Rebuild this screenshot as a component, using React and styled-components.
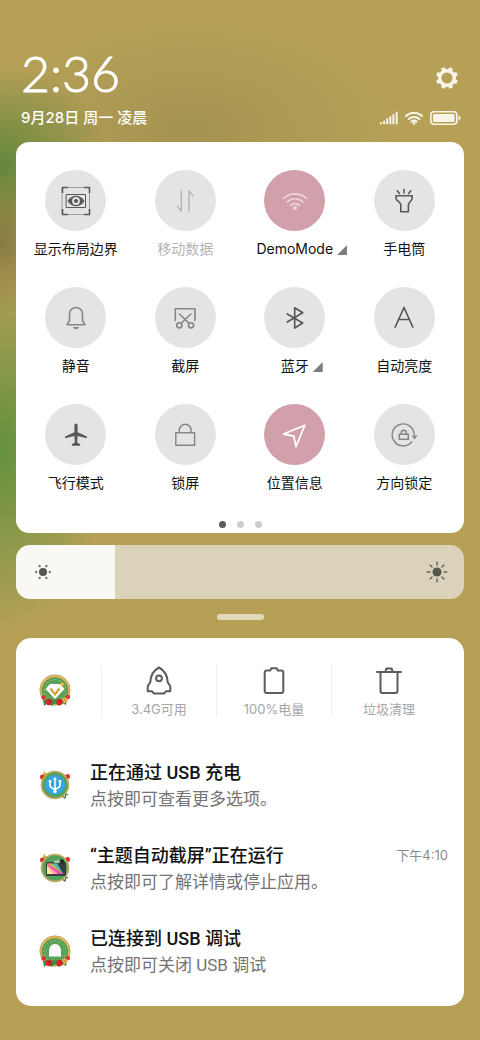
import React, { useState } from "react";
import styled, { createGlobalStyle } from "styled-components";

const tiles = [
  { name: "显示布局边界", icon: "layout" },
  { name: "移动数据", icon: "data", tone: "disabled" },
  { name: "DemoMode", icon: "wifi", tone: "dim", more: true },
  { name: "手电筒", icon: "torch" },
  { name: "静音", icon: "bell", tone: "soft" },
  { name: "截屏", icon: "scissors", tone: "soft" },
  { name: "蓝牙", icon: "bluetooth", more: true },
  { name: "自动亮度", icon: "auto" },
  { name: "飞行模式", icon: "plane" },
  { name: "锁屏", icon: "lock", tone: "soft" },
  { name: "位置信息", icon: "location", tone: "active" },
  { name: "方向锁定", icon: "rotation", tone: "soft" },
];

const stats = [
  { name: "3.4G可用", icon: "rocket" },
  { name: "100%电量", icon: "battery" },
  { name: "垃圾清理", icon: "trash" },
];

const notifications = [
  { title: "正在通过 USB 充电", text: "点按即可查看更多选项。", badge: "usb" },
  {
    title: "“主题自动截屏”正在运行",
    text: "点按即可了解详情或停止应用。",
    badge: "theme",
    time: "下午4:10",
  },
  { title: "已连接到 USB 调试", text: "点按即可关闭 USB 调试", badge: "debug" },
];

const icons = {
  layout: (
    <>
      <rect x="2.500" y="2.500" width="27" height="27" strokeWidth="1" opacity="0.5" />
      <path d="M2.500 8V2.500H8M24 2.500h5.500V8M29.500 24v5.500H24M8 29.500H2.500V24" strokeLinecap="butt" />
      <rect x="6.500" y="9.500" width="19" height="13" strokeWidth="1" />
      <path
        d="M7.500 16c2.500-3.800 5.500-5.200 8.500-5.200s6 1.400 8.500 5.200c-2.500 3.800-5.500 5.200-8.500 5.200S10 19.800 7.500 16z"
        fill="currentColor"
        stroke="none"
      />
      <circle cx="16" cy="16" r="3" stroke="#e4e4e4" strokeWidth="1.800" />
    </>
  ),
  data: <path d="M12.300 6v20l-4-5M20 26V6l4 5" strokeWidth="1.600" />,
  wifi: (
    <>
      <path d="M4.500 13.500a16.500 16.500 0 0 1 23 0M8 17a11.500 11.500 0 0 1 16 0M11.500 20.500a6.500 6.500 0 0 1 9 0" strokeWidth="1.700" />
      <circle cx="16" cy="23" r="2" fill="currentColor" stroke="none" />
    </>
  ),
  torch: (
    <path d="M8 10.800h16.200v2.400c0 3-3.800 3.600-3.800 6.800v6.800h-7.600V20c0-3.200-4.800-3.800-4.800-6.800zM16 4.500V8M9.300 5.800l2.200 2.700M22.800 5.800l-2.200 2.700" />
  ),
  bell: (
    <>
      <path d="M7 22.800l2.500-4.300V12a6.500 6.500 0 0 1 13 0v6.500l2.500 4.300z" />
      <path d="M13 25h6c-.6 1.400-1.600 2-3 2s-2.400-.6-3-2z" fill="currentColor" stroke="none" />
    </>
  ),
  scissors: (
    <>
      <path d="M6.300 18.500V6.800h19.700v11.700M12.300 21.300L21.800 12M20 21.300L10.500 12" />
      <circle cx="10.300" cy="23.300" r="2.600" />
      <circle cx="22" cy="23.300" r="2.600" />
    </>
  ),
  bluetooth: <path d="M8.300 12l15.400 9-8 5V5.800l8 5-15.400 9.200" strokeWidth="1.700" />,
  auto: <path d="M7.200 25L16 5.500 24.800 25M10.500 17.500h11" strokeWidth="1.700" />,
  plane: (
    <path
      d="M16 4.600c1 0 1.600.9 1.600 2.100v6.500l8.800 4.100c.5.300.6.800.6 1.900l-9.400-2.200-.4 6.500 3 1.800v1.500h-8.400v-1.500l3-1.800-.4-6.500L5 19.200c0-1.100.1-1.600.6-1.900l8.800-4.100V6.700c0-1.200.6-2.100 1.600-2.100z"
      fill="currentColor"
      stroke="none"
    />
  ),
  lock: <path d="M6.800 13.800h18.800v12.500H6.800zM10.300 13.500v-2.300a5.900 5.900 0 0 1 11.800 0v2.300" strokeWidth="1.400" />,
  location: <path d="M25.700 6.300L4.500 15l10.300 2.200L17 27.700z" strokeWidth="1.800" />,
  rotation: (
    <>
      <path d="M23.800 22.800A11 11 0 1 1 26.200 15.500" strokeWidth="1.400" />
      <path d="M23.500 16.500h6l-3 4z" fill="currentColor" stroke="none" />
      <path d="M11.300 15.300h9v5h-9zM13.300 15v-1.300a2.500 2.500 0 0 1 5 0V15" />
    </>
  ),
  rocket: (
    <>
      <path d="M16 2.500C11 5.200 7.500 10.500 7.300 17.300l-2.600 4v5H9l2 2.200h10l2-2.200h4.300v-5l-2.600-4C24.500 10.500 21 5.200 16 2.500z" strokeWidth="2" />
      <circle cx="16" cy="13.300" r="2.900" strokeWidth="2" />
    </>
  ),
  battery: (
    <path d="M8.700 5.500h3.500l1-2.200h5.600l1 2.200h3.500c1.300 0 2 .7 2 2V26c0 1.300-.7 2-2 2H8.700c-1.300 0-2-.7-2-2V7.500c0-1.300.7-2 2-2z" strokeWidth="2" />
  ),
  trash: (
    <path d="M4 7h24M12.300 7l1-3.500h5.400l1 3.500M7.500 7v19c0 1.300.7 2 2 2h13c1.300 0 2-.7 2-2V7" strokeWidth="2" />
  ),
};

const Icon = ({ name }) => (
  <svg
    width="32"
    height="32"
    viewBox="0 0 32 32"
    fill="none"
    stroke="currentColor"
    strokeWidth="1.600"
    strokeLinecap="round"
    strokeLinejoin="round"
    aria-hidden="true"
  >
    {icons[name]}
  </svg>
);

const Gear = () => (
  <svg width="24" height="24" viewBox="0 0 24 24" fill="none" aria-hidden="true">
    <circle cx="12" cy="12" r="7.300" stroke="currentColor" strokeWidth="3.400" />
    {[0, 1, 2, 3, 4, 5, 6, 7].map((n) => (
      <rect
        key={n}
        x="9.900"
        y="1"
        width="4.200"
        height="4.500"
        rx="1"
        fill="currentColor"
        transform={`rotate(${22.5 + n * 45} 12 12)`}
      />
    ))}
  </svg>
);

const Signal = () => (
  <svg width="18" height="14" viewBox="0 0 18 14" fill="none" stroke="currentColor" strokeWidth="2" aria-hidden="true">
    <path d="M1 13.300v-2M4.100 13.300V9.700M7.200 13.300V7.500M10.300 13.300V5.300M13.400 13.300V3.200M16.700 13.300V.8" />
  </svg>
);

const SmallWifi = () => (
  <svg width="18" height="14" viewBox="0 0 18 14" fill="none" stroke="currentColor" strokeWidth="2" strokeLinecap="round" aria-hidden="true">
    <path d="M1 5a11.500 11.500 0 0 1 16 0M3.700 8a7.700 7.700 0 0 1 10.600 0M6.500 10.600a4 4 0 0 1 5 0" />
    <circle cx="9" cy="12.500" r="1.400" fill="currentColor" stroke="none" />
  </svg>
);

const Battery = () => (
  <svg width="31" height="14" viewBox="0 0 31 14" aria-hidden="true">
    <rect x=".8" y=".8" width="26" height="12.400" rx="3.200" fill="none" stroke="currentColor" strokeWidth="1.600" />
    <rect x="3" y="3" width="21.600" height="8" rx="1.300" fill="currentColor" />
    <path d="M28.500 4.800c1.600.2 2 1 2 2.200s-.4 2-2 2.200z" fill="currentColor" />
  </svg>
);

const Sun = ({ large }) => (
  <svg width="24" height="24" viewBox="0 0 24 24" aria-hidden="true">
    <circle cx="12" cy="12" r={large ? 4.5 : 4} fill="#55564c" />
    {large
      ? [0, 45, 90, 135, 180, 225, 270, 315].map((a) => (
          <path key={a} d="M12 2.200v2.800" stroke="#66655a" strokeWidth="1.400" strokeLinecap="round" transform={`rotate(${a} 12 12)`} />
        ))
      : [30, 90, 150, 210, 270, 330].map((a) => (
          <circle key={a} cx="12" cy="5.200" r="1.200" fill="#77776c" transform={`rotate(${a} 12 12)`} />
        ))}
  </svg>
);

const Roses = () => (
  <>
    <path d="M4 26l1 6 4-3 4 3 3-3 4 3 3-3 4 2 1-6z" fill="#3f8a45" />
    <circle cx="4.600" cy="23.500" r="2.200" fill="#d9312b" />
    <circle cx="10" cy="28" r="3.200" fill="#d42a28" />
    <circle cx="20.500" cy="28" r="3.200" fill="#d42a28" />
    <circle cx="29" cy="23" r="2.200" fill="#e03a30" />
    <path d="M9 27.500a1.300 1.300 0 1 1 1.300 1.500M19.500 27.500a1.300 1.300 0 1 1 1.300 1.500" fill="none" stroke="#a3171d" strokeWidth=".7" />
    <path d="M22.500 24.500l3-1 3.500 1.500-1 3-3 1.500z" fill="#e2b14f" />
    <path d="M24.500 24.500l2.500 3" stroke="#b5772b" strokeWidth=".6" />
  </>
);

const Wreath = () => (
  <>
    <circle cx="16" cy="16" r="15.200" fill="#e7b659" stroke="#9b8454" strokeWidth=".5" />
    <circle cx="16" cy="16.500" r="13.200" fill="#5aa35a" />
    <circle cx="16" cy="16.500" r="11" fill="none" stroke="#e4c862" strokeWidth="1" strokeDasharray="1 3.300" />
    <circle cx="16" cy="16.500" r="12.500" fill="none" stroke="#3b8048" strokeWidth=".6" strokeDasharray="2 2.500" />
  </>
);

const Ornament = () => (
  <>
    <path d="M5 1.500l1.500 2.300L9 4.500 7 7 3.500 6.500z" fill="#e1b24c" />
    <circle cx="3.500" cy="8" r="2.500" fill="#d8332e" />
    <circle cx="28.500" cy="7.500" r="2.500" fill="#d8332e" />
    <path d="M23 27l3 2 1-4 2 1" stroke="#39743b" strokeWidth="1.200" fill="none" />
    <circle cx="16" cy="16" r="14" fill="#deb15b" stroke="#8d9355" strokeWidth=".5" />
    <circle cx="16" cy="16" r="12.700" fill="#55a05c" />
  </>
);

const badges = {
  clean: (
    <>
      <Wreath />
      <path d="M11 10h10.500l4 5-9.500 10L6.500 15z" fill="#fff" />
      <path d="M11.500 14.500l4.500 6 4.500-6" stroke="#d9a33e" strokeWidth="2.200" fill="none" />
      <path d="M23 7.500l1 2 2 .7-2 1-1 2-1-2-2-1 2-.7z" fill="#f1bd42" />
      <Roses />
    </>
  ),
  usb: (
    <>
      <Ornament />
      <circle cx="16" cy="16" r="10" fill="#37a5df" />
      <path d="M16 23.500V9.500M11 12v4.500c0 3 5 2.300 5 5M21 12v4.500c0 3-5 2.300-5 5" stroke="#fff" strokeWidth="1.600" fill="none" />
      <path d="M16 8l2 3h-4zM9.800 11h2.500v2.500H9.800zM19.700 11h2.500v2.500h-2.500z" fill="#fff" />
      <circle cx="16" cy="22.500" r="1.700" fill="#fff" />
    </>
  ),
  theme: (
    <>
      <Ornament />
      <rect x="7" y="10" width="20" height="14" rx="1.500" fill="#37403d" />
      <circle cx="23" cy="9.500" r="2.200" fill="#252c2d" />
      <path d="M15 9l5-1 1 3h-6z" fill="#a4cba2" />
      <path d="M8 11.500h3L24.500 22H8z" fill="#ef4fba" />
      <path d="M8 12.500L19 22H8z" fill="#ff9fb8" />
      <path d="M8 14L14 22H8z" fill="#ffe9a0" />
      <path d="M8 11.500h4L24.500 22z" fill="#f2a83e" />
      <path d="M11 11.500h4L24.500 22z" fill="#7dc96b" />
      <path d="M15 11.500h3L24.500 22z" fill="#4cc3ea" />
    </>
  ),
  debug: (
    <>
      <Wreath />
      <path d="M10 21.500V16c0-4.200 2.500-7 6-7s6 2.800 6 7v5.500z" fill="#fafafa" />
      <Roses />
    </>
  ),
};

const Badge = ({ name }) => (
  <svg width="34" height="34" viewBox="-1 0 34 34" aria-hidden="true">
    {badges[name]}
  </svg>
);

export default function App() {
  const [level, setLevel] = useState(22);
  return (
    <>
      <GlobalStyle />
      <Page>
        <Header>
          <HeaderRow>
            <Clock>2:36</Clock>
            <GearButton aria-label="设置">
              <Gear />
            </GearButton>
          </HeaderRow>
          <HeaderRow>
            <DateText>9月28日 周一 凌晨</DateText>
            <Status>
              <Signal />
              <SmallWifi />
              <Battery />
            </Status>
          </HeaderRow>
        </Header>

        <Panel>
          <TileGrid>
            {tiles.map((tile) => (
              <Tile key={tile.name}>
                <Disc $tone={tile.tone}>
                  <Icon name={tile.icon} />
                </Disc>
                <TileName $tone={tile.tone}>
                  {tile.name}
                  {tile.more && <More />}
                </TileName>
              </Tile>
            ))}
          </TileGrid>
          <Dots>
            <Dot $current />
            <Dot />
            <Dot />
          </Dots>
        </Panel>

        <Brightness>
          <BrightnessInput
            type="range"
            min="0"
            max="100"
            value={level}
            aria-label="亮度"
            onChange={(e) => setLevel(Number(e.target.value))}
            style={{
              backgroundImage: `linear-gradient(90deg, rgba(255,255,255,.85) ${level}%, transparent ${level}%)`,
            }}
          />
          <BrightnessIcons>
            <Sun />
            <Sun large />
          </BrightnessIcons>
        </Brightness>
        <Handle />

        <Card>
          <Cleaner>
            <CleanerBadge>
              <Badge name="clean" />
            </CleanerBadge>
            {stats.map((stat) => (
              <Stat key={stat.name}>
                <Icon name={stat.icon} />
                {stat.name}
              </Stat>
            ))}
          </Cleaner>
          <List>
            {notifications.map((item) => (
              <Item key={item.title}>
                <Badge name={item.badge} />
                <ItemBody>
                  <ItemTitle>{item.title}</ItemTitle>
                  <ItemText>{item.text}</ItemText>
                </ItemBody>
                {item.time && <ItemTime>{item.time}</ItemTime>}
              </Item>
            ))}
          </List>
        </Card>
      </Page>
    </>
  );
}

const GlobalStyle = createGlobalStyle`
  * {
    box-sizing: border-box;
  }
  body {
    margin: 0;
    background: #b5a056;
    font-family: Inter, "Noto Sans CJK SC", sans-serif;
  }
  button {
    border: 0;
    padding: 0;
    background: none;
    font: inherit;
    color: inherit;
    cursor: pointer;
  }
  svg {
    display: block;
    flex: none;
  }
`;

const Page = styled.div`
  min-height: 100vh;
  padding: 49px 16px 34px;
  background:
    radial-gradient(ellipse 50px 70px at 0 245px, rgba(130, 114, 62, 0.8), transparent),
    radial-gradient(ellipse 110px 100px at 0 165px, rgba(95, 133, 58, 0.95), transparent),
    radial-gradient(ellipse 110px 180px at 0 450px, rgba(98, 145, 62, 1), transparent),
    radial-gradient(ellipse 200px 110px at 190px 130px, rgba(150, 135, 78, 0.5), transparent),
    #b5a056;
`;

const Header = styled.header`
  display: flex;
  flex-direction: column;
  gap: 10px;
  padding: 0 3px 13px 5px;
  color: #fff;
`;

const HeaderRow = styled.div`
  display: flex;
  align-items: center;
  justify-content: space-between;
`;

const Clock = styled.div`
  font-family: Lato, sans-serif;
  font-size: 50px;
  font-weight: 300;
  line-height: 48px;
  -webkit-text-stroke: 1px #fff;
`;

const GearButton = styled.button`
  margin: 10px 2px 0 0;
  color: #f7f4ea;
`;

const DateText = styled.div`
  font-size: 15px;
  font-weight: 500;
  line-height: 22px;
`;

const Status = styled.div`
  display: flex;
  align-items: center;
  gap: 7px;
  color: #f7f4ea;
`;

const Panel = styled.section`
  padding: 28px 5px 5px;
  border-radius: 13px;
  background: #fff;
`;

const TileGrid = styled.div`
  display: grid;
  grid-template-columns: repeat(4, 1fr);
  row-gap: 28px;
`;

const Tile = styled.button`
  display: flex;
  flex-direction: column;
  align-items: center;
  gap: 8px;
`;

const discColors = {
  active: "#fff",
  dim: "#ecd5da",
  disabled: "#b9b9b9",
  soft: "#858585",
};

const Disc = styled.span`
  display: grid;
  place-items: center;
  width: 61px;
  height: 61px;
  border-radius: 50%;
  background: ${(p) => (p.$tone === "active" || p.$tone === "dim" ? "#d2a0ab" : "#e4e4e4")};
  color: ${(p) => discColors[p.$tone] || "#575757"};
`;

const TileName = styled.span`
  position: relative;
  font-size: 14px;
  line-height: 20px;
  white-space: nowrap;
  color: ${(p) => (p.$tone === "disabled" ? "#b4b4b4" : "#111")};
`;

const More = styled.span`
  position: absolute;
  left: 100%;
  bottom: 4px;
  width: 10px;
  height: 10px;
  margin-left: 4px;
  background: #7d7d7d;
  clip-path: polygon(100% 0, 100% 100%, 0 100%);
`;

const Dots = styled.div`
  display: flex;
  justify-content: center;
  gap: 11px;
  padding-top: 28px;
`;

const Dot = styled.span`
  width: 7px;
  height: 7px;
  border-radius: 50%;
  background: ${(p) => (p.$current ? "#5c5c5c" : "#cdcdcd")};
`;

const Brightness = styled.div`
  position: relative;
  height: 54px;
  margin-top: 12px;
`;

const BrightnessInput = styled.input`
  appearance: none;
  display: block;
  width: 100%;
  height: 100%;
  margin: 0;
  border-radius: 14px;
  background-color: rgba(232, 227, 221, 0.75);
  cursor: pointer;

  &::-webkit-slider-thumb {
    appearance: none;
    width: 1px;
    height: 54px;
  }
`;

const BrightnessIcons = styled.div`
  position: absolute;
  inset: 0;
  display: flex;
  align-items: center;
  justify-content: space-between;
  padding: 0 15px;
  pointer-events: none;
`;

const Handle = styled.div`
  width: 47px;
  height: 6px;
  margin: 15px auto 18px;
  border-radius: 3px;
  background: #e2d8bb;
`;

const Card = styled.section`
  padding: 27px 16px 27px 22px;
  border-radius: 15px;
  background: #fff;
`;

const Cleaner = styled.div`
  display: flex;
  height: 52px;
  padding-right: 2px;
`;

const CleanerBadge = styled.div`
  display: flex;
  align-items: center;
  width: 63px;
`;

const Stat = styled.button`
  display: flex;
  flex: 1;
  flex-direction: column;
  align-items: center;
  gap: 2px;
  border-left: 1px solid #efefef;
  font-size: 13px;
  line-height: 20px;
  color: #a6a6a6;

  svg {
    color: #5c5c5c;
  }
`;

const List = styled.div`
  display: flex;
  flex-direction: column;
  gap: 29px;
  padding-top: 42px;
`;

const Item = styled.article`
  display: flex;
  align-items: center;
  gap: 18px;
`;

const ItemBody = styled.div`
  flex: 1;
  font-family: Roboto, "Noto Sans CJK SC", sans-serif;
  line-height: 27px;
`;

const ItemTitle = styled.div`
  font-size: 18px;
  font-weight: 500;
  color: #111;
`;

const ItemText = styled.div`
  font-size: 17px;
  color: #737373;
`;

const ItemTime = styled.time`
  align-self: flex-start;
  font-size: 13px;
  line-height: 27px;
  color: #8c8c8c;
`;
